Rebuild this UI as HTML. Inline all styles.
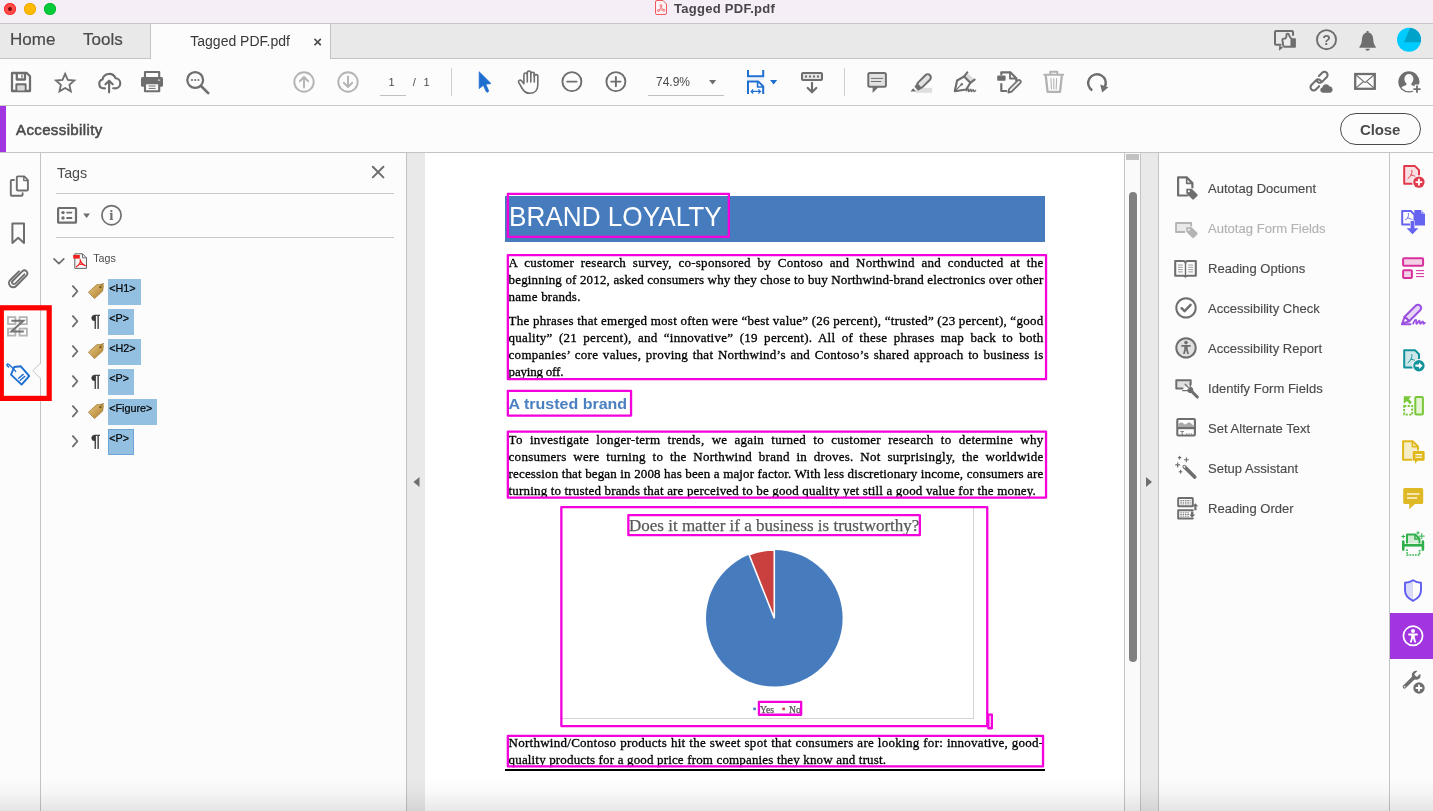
<!DOCTYPE html>
<html lang="en">
<head>
<meta charset="utf-8">
<title>Tagged PDF.pdf</title>
<style>
*{box-sizing:border-box;margin:0;padding:0}
html,body{width:1433px;height:811px;overflow:hidden;background:#fcfcfc}
body{position:relative;font-family:"Liberation Sans",Arial,sans-serif;color:#4b4b4b}
.a{position:absolute}
.t{position:absolute;white-space:pre;line-height:1}
svg{position:absolute;left:0;top:0;overflow:visible}
.s{fill:none;stroke:#6e6e6e;stroke-width:2;stroke-linecap:round;stroke-linejoin:round}
.f{fill:#6e6e6e;stroke:none}
.ls{fill:none;stroke:#b4b4b4;stroke-width:2;stroke-linecap:round;stroke-linejoin:round}
.bs{fill:none;stroke:#1f6fd0;stroke-width:2;stroke-linecap:round;stroke-linejoin:round}
.m{position:absolute;border:2px solid #f200d8}
.doc{position:absolute;white-space:pre;font-family:"Liberation Serif","Times New Roman",serif;font-size:13px;line-height:17px;color:#000;letter-spacing:.26px;-webkit-text-stroke:.3px #000}
.hl{position:absolute;background:#93c0e0;height:26px}
.tag{position:absolute;white-space:pre;font-size:10.800px;line-height:12px;color:#000;-webkit-text-stroke:.2px #000}
.ri{position:absolute;left:1208px;letter-spacing:.03px;font-size:13px;line-height:16px;white-space:pre;color:#4b4b4b;-webkit-text-stroke:.15px currentColor}
</style>
</head>
<body>
<div id="app" style="position:absolute;left:0;top:0;width:1433px;height:811px;overflow:hidden;will-change:transform">
<!-- window title bar -->
<div class="a" style="left:0;top:0;width:1433px;height:23px;background:#f6eef7"></div>
<div class="a" style="left:0;top:23px;width:1433px;height:1px;background:#c9c6c9"></div>
<div class="a" style="left:4px;top:3px;width:12px;height:12px;border-radius:50%;background:#ff4a4a;box-shadow:inset 0 0 0 .8px #ff2626"></div>
<div class="a" style="left:8px;top:7px;width:4px;height:4px;border-radius:50%;background:#7a0a0a"></div>
<div class="a" style="left:24px;top:3px;width:12px;height:12px;border-radius:50%;background:#feba00;box-shadow:inset 0 0 0 .8px #eaa200"></div>
<div class="a" style="left:44px;top:3px;width:12px;height:12px;border-radius:50%;background:#05cb3a;box-shadow:inset 0 0 0 .8px #00b62c"></div>
<div class="t" style="left:674px;top:1px;font-size:13px;font-weight:bold;letter-spacing:.28px;line-height:15px;color:#48444a">Tagged PDF.pdf</div>
<!-- tab bar -->
<div class="a" style="left:0;top:24px;width:1433px;height:34px;background:#e9e9e9"></div>
<div class="a" style="left:0;top:58px;width:1433px;height:1px;background:#c4c4c4"></div>
<div class="a" style="left:150px;top:24px;width:181px;height:35px;background:#fcfcfc;border-left:1px solid #c4c4c4;border-right:1px solid #c4c4c4"></div>
<div class="t" style="left:10px;top:30px;font-size:17px;line-height:20px;color:#4b4b4b;-webkit-text-stroke:.2px #4b4b4b">Home</div>
<div class="t" style="left:83px;top:30px;font-size:17px;line-height:20px;color:#4b4b4b;-webkit-text-stroke:.2px #4b4b4b">Tools</div>
<div class="t" style="left:190.300px;top:33.400px;font-size:14px;line-height:17px;color:#383838">Tagged PDF.pdf</div>
<div class="t" style="left:313.200px;top:32.600px;font-size:15px;line-height:18px;color:#4b4b4b;font-weight:bold">×</div>
<!-- toolbar -->
<div class="a" style="left:0;top:105px;width:1433px;height:1px;background:#c8c8c8"></div>
<div class="t" style="left:388.600px;top:74.800px;font-size:11px;line-height:14px;color:#4b4b4b">1</div>
<div class="a" style="left:380px;top:95px;width:26px;height:1px;background:#c0c0c0"></div>
<div class="t" style="left:412.700px;top:74.800px;font-size:11px;line-height:14px;color:#4b4b4b">/</div>
<div class="t" style="left:423.600px;top:74.800px;font-size:11px;line-height:14px;color:#4b4b4b">1</div>
<div class="a" style="left:451px;top:68px;width:1px;height:28px;background:#cfcfcf"></div>
<div class="t" style="left:656px;top:75px;font-size:12px;line-height:14px;color:#4b4b4b">74.9%</div>
<div class="a" style="left:648px;top:95px;width:76px;height:1px;background:#c0c0c0"></div>
<div class="a" style="left:844px;top:68px;width:1px;height:28px;background:#cfcfcf"></div>
<!-- accessibility bar -->
<div class="a" style="left:0;top:106px;width:6px;height:46px;background:#a135e0"></div>
<div class="a" style="left:0;top:152px;width:1433px;height:1px;background:#c4c4c4"></div>
<div class="t" style="left:16px;top:121px;font-size:15px;letter-spacing:.38px;-webkit-text-stroke:.55px #4b4b4b;line-height:18px;color:#4b4b4b">Accessibility</div>
<div class="a" style="left:1340px;top:113px;width:81px;height:32px;border:1px solid #4b4b4b;border-radius:16px;background:#fcfcfc"></div>
<div class="t" style="left:1360px;top:121px;font-size:15px;font-weight:bold;line-height:18px;color:#4b4b4b;letter-spacing:-.15px">Close</div>
<!-- toolbar icons -->
<svg width="1433" height="811" viewBox="0 0 1433 811">
 <!-- title doc icon -->
 <path d="M657 .5h6l3.5 3.5v9a1.5 1.5 0 0 1-1.5 1.5h-8a1.5 1.5 0 0 1-1.5-1.5v-11a1.5 1.5 0 0 1 1.5-1.5z" fill="#fdf3f5" stroke="#f05a5f" stroke-width="1"/>
 <g fill="none" stroke="#f05a5f" stroke-width=".8"><circle cx="661" cy="5.6" r="1"/><circle cx="658.3" cy="10.6" r="1"/><circle cx="663.8" cy="10.2" r="1"/><path d="M661 6.6c0 2-1.4 3-2.2 3.4M661 6.6c.4 1.6 1.3 2.6 2.3 3M659.3 10.4c1.4-.6 2.6-.6 3.6-.3"/></g>
 <!-- tab bar right -->
 <g class="s" style="stroke-width:2">
  <path d="M1280.600 44.800h-4.600a1 1 0 0 1-1-1v-11.800a1 1 0 0 1 1-1h16a1 1 0 0 1 1 1v3"/>
  <path d="M1282.400 39.800c0-.8.500-1.200 1.300-1.200h1.700c1-1.200 1.300-2.400 1.100-3.700c-.2-1.500 2.200-1.900 2.600.3c.2 1.200 1 2.500 2.300 3.600v7.900h-6.600c-.9 0-1.400-.4-1.600-1.200z" style="fill:#ededed;stroke-width:1.900"/>
 </g>
 <path d="M1279.200 45.400l-.2 5.400l4.200-3.400z" class="f"/>
 <rect x="1291.600" y="38.300" width="4.300" height="9.400" rx=".8" class="f"/>
 <circle cx="1326.500" cy="39.700" r="9.550" class="s" style="stroke-width:1.900"/>
 <path class="f" d="M1366.6 31h2v1.4c3 .7 4.5 3.2 4.6 6.4.1 3.600 1 6 2.600 8.200v.8h-16.400v-.8c1.600-2.200 2.500-4.600 2.600-8.200.1-3.200 1.600-5.700 4.600-6.400z"/>
 <path class="f" d="M1365.300 48.700h4.600c-.3 1.300-1.200 2-2.300 2s-2-.7-2.300-2z"/>
 <circle cx="1409" cy="39.800" r="12" fill="#00cbff"/>
 <clipPath id="av"><circle cx="1409" cy="39.800" r="12"/></clipPath>
 <path d="M1410.400 27l-6.400 15.200h18v-15.200z" fill="#00a2c9" clip-path="url(#av)"/>
 <!-- main toolbar -->
 <g class="s" stroke-width="2" style="stroke-width:2.26">
  <path d="M12 73h14.800l3.200 3.200v14.800h-18z" style="stroke-linejoin:round"/>
  <path d="M16.800 73.500v6h8.200v-6"/>
  <path d="M16.500 90.500v-6h9v6"/>
 </g>
 <rect x="17.500" y="85.500" width="7" height="5" fill="#d9d9d9"/>
 <rect x="21.300" y="74.600" width="1.300" height="3.200" fill="#6e6e6e"/>
 <polygon class="s" style="stroke-width:1.8;stroke-linejoin:miter" points="65.15,73.80 67.80,79.86 74.38,80.50 69.43,84.89 70.85,91.35 65.15,88.00 59.45,91.35 60.87,84.89 55.92,80.50 62.50,79.86"/>
 <g class="s" style="stroke-width:2.15">
  <path d="M105 88.300h-1.600a4.500 4.500 0 0 1-.9-8.800a6.800 6.800 0 0 1 13-1.300a5 5 0 0 1-.5 10.100h-1.800"/>
  <path d="M109.100 92.300v-11.200M105.500 84.300l3.600-3.600l3.600 3.600"/>
 </g>
 <!-- printer -->
 <rect x="141" y="77" width="22" height="9.800" rx="1.600" class="f"/>
 <rect x="145" y="72" width="14.200" height="6" class="s" style="stroke-width:2.15;fill:#fcfcfc"/>
 <rect x="145" y="83.200" width="14.200" height="8" class="s" style="stroke-width:2.15;fill:#fcfcfc"/>
 <path d="M149 86h6.200M149 88.400h6.200" class="s" style="stroke-width:1"/>
 <rect x="158" y="79.600" width="2.200" height="1" fill="#f0f0f0"/>
 <!-- search -->
 <circle cx="195.200" cy="80" r="7.900" class="s" style="stroke-width:2.26"/>
 <path d="M201 86l7.200 7.200" class="s" style="stroke-width:2.6"/>
 <circle cx="192" cy="80" r="1.05" class="f"/><circle cx="195.200" cy="80" r="1.05" class="f"/><circle cx="198.400" cy="80" r="1.05" class="f"/>
 <!-- page up/down -->
 <g class="ls" style="stroke-width:1.92">
  <circle cx="304" cy="82" r="9.700"/>
  <path d="M304 87.500v-10.500M299.800 81.200l4.200-4.200l4.200 4.200"/>
  <circle cx="348" cy="82" r="9.700"/>
  <path d="M348 76.500v10.500M343.800 82.800l4.200 4.200l4.200-4.200"/>
 </g>
 <!-- select arrow -->
 <path d="M479.200 71.800v16.800l4.100-3.400l2.900 6.200a1 1 0 0 0 2.300-1l-2.800-6.200l5.300-.6z" fill="#1f6fd0" stroke="#1f6fd0" stroke-width=".8" stroke-linejoin="round"/>
 <!-- hand -->
 <g class="s" style="stroke-width:1.6">
  <path d="M523.9 83V74.600c0-2.200 3.400-2.200 3.400 0V72.700c0-2.200 3.500-2.200 3.500 0V73.900c0-2.200 3.500-2.200 3.500 0V76.300c0-2.200 3.500-2.200 3.500 0V85c0 5.200-3.400 8.300-8 8.300c-3.600 0-5.800-1.600-7.600-4.800l-3.500-6.100c-1-1.800 1.400-3.200 2.800-1.600l2.400 2.900"/>
  <path d="M527.3 74.600V82M530.800 72.700V82M534.300 73.900V82"/>
 </g>
 <!-- zoom out/in -->
 <g class="s" style="stroke-width:1.92">
  <circle cx="571.900" cy="81.600" r="9.500"/><path d="M567.200 81.600h9.400"/>
  <circle cx="615.900" cy="81.600" r="9.500"/><path d="M611.200 81.600h9.400M615.900 76.900v9.400"/>
 </g>
 <path d="M709 80h7.200l-3.600 4.400z" class="f"/>
 <!-- fit width -->
 <g class="bs" style="stroke-width:2;stroke-linecap:butt;stroke-linejoin:miter">
  <path d="M748 70v6.300h15.200v-6.300"/>
  <path d="M748 94v-12.600h10.200l5 5v7.600"/>
  <path d="M757.600 81.600v5.400h5.400" style="stroke-width:1.6"/>
  <path d="M751.300 91.400h9M753.200 89.300l-2.100 2.100l2.100 2.100M758.400 89.300l2.100 2.100l-2.100 2.100" style="stroke-width:1.2"/>
 </g>
 <rect x="747" y="78.600" width="17.200" height="1" fill="#dde8f5"/>
 <path d="M770 80h7.200l-3.600 4.400z" fill="#1f6fd0"/>
 <!-- scrolling -->
 <rect x="802" y="73" width="20" height="7" rx="1" class="s" style="stroke-width:2.050;fill:#e4e4e4"/>
 <g class="f"><rect x="805" y="75.500" width="2" height="2"/><rect x="809" y="75.500" width="2" height="2"/><rect x="813" y="75.500" width="2" height="2"/><rect x="817" y="75.500" width="2" height="2"/></g>
 <path d="M812 82.800v9M807.700 88l4.300 4.300l4.300-4.300" class="s" style="stroke-width:2.15"/>
 <!-- comment -->
 <rect x="868.300" y="73" width="17.600" height="13.700" rx="1.500" class="s" style="stroke-width:2;fill:#e2e2e2"/>
 <path d="M872.600 87v6l6-6z" class="f"/>
 <path d="M871.300 78.400h11.500M871.300 81.500h9.600" class="s" style="stroke-width:1"/>
 <!-- highlighter -->
 <rect x="916" y="87.800" width="16.200" height="5" fill="#dedede"/>
 <rect x="-3.200" y="-15.600" width="6.400" height="16.600" rx="3.200" class="s" style="stroke-width:2;fill:#e2e2e2" transform="translate(918.9 86.200) rotate(45)"/>
 <path d="M-3.400 -1h6.800l-.6 4.600h-5.600z" class="f" stroke="#6e6e6e" stroke-width="1.600" stroke-linejoin="round" transform="translate(918.9 86.200) rotate(45)"/>
 <path d="M913.200 88.200l3 3.400h-5.800z" class="f" stroke="#6e6e6e" stroke-width=".8" stroke-linejoin="round"/>
 <!-- sign pen -->
 <path d="M968 73.500l6 5.600l-3.400 3.600l-5.800-5.600z" fill="#dcdcdc"/>
 <g class="s" style="stroke-width:2.150">
  <path d="M954.800 91.200l2.300-10.700l7-4l6.300 6.200l-4.200 6.800z"/>
  <path d="M954.800 91.200l6.500-6.600" style="stroke-width:1.2"/>
  <path d="M964 76.600l3.300-4.200M970.300 82.800l4.300-3.200"/>
  <path d="M966.500 91c.8-1.800 1.600-2.600 2-2c.4.700-.4 2.600.3 2.700c.7 0 1.200-2.600 2-2.500c.6.100-.2 2.400.5 2.500c.7 0 1.300-2 2-2c.6 0 0 1.900.7 2c.5 0 1-.6 1.600-1.200" style="stroke-width:1.350"/>
 </g>
 <circle cx="961.800" cy="84.200" r="1.200" class="f"/>
 <!-- edit pdf -->
 <g class="s" style="stroke-width:2.15">
  <path d="M1001.300 74.500v-2.200h9l6 6v2.400"/>
  <path d="M1010 72.500v6h6" style="stroke-width:1.81"/>
  <path d="M1001.300 84v7h5"/>
  <path d="M1008.300 92.600l.8-3.600l8.700-8.700c1.500-1.500 4 1 2.600 2.500l-8.700 8.800z" style="stroke-width:1.69;fill:#e8e8e8"/>
 </g>
 <rect x="997.200" y="75.400" width="8.400" height="5.400" rx="1" class="f"/>
 <!-- trash -->
 <g class="ls" style="stroke:#b2b2b2;stroke-width:2.03">
  <path d="M1044.200 74.800h19"/>
  <path d="M1050.300 74.600v-2.800h7v2.800"/>
  <path d="M1045.800 76l1.800 15.800h12.400l1.800-15.800" style="stroke-width:2.26"/>
  <path d="M1051 78.500l.4 10.500M1053.800 78.500v10.500M1056.600 78.500l-.4 10.500" style="stroke-width:1.1"/>
 </g>
 <!-- rotate -->
 <path d="M1092.200 90.400a8.800 8.800 0 1 1 12.700-3.600" class="s" style="stroke-width:2.400;stroke-linecap:butt"/>
 <path d="M1100.200 84.600l8.200 2.700l-6.200 5.300z" class="f" stroke="#6e6e6e" stroke-width=".6" stroke-linejoin="round"/>
 <!-- share link -->
 <g class="s" style="stroke-width:2.050">
  <path d="M-1.300 -3.150H3.300A3.150 3.150 0 0 1 3.300 3.150H-3.300A3.150 3.150 0 0 1 -6.155 -1.331" transform="translate(1322.100 77.300) rotate(-45)"/>
  <path d="M-1.300 -3.150H3.300A3.150 3.150 0 0 1 3.300 3.150H-3.300A3.150 3.150 0 0 1 -6.155 -1.331" transform="translate(1316 84.900) rotate(135)"/>
 </g>
 <path d="M1322.800 92.700a2.700 2.700 0 0 1-.6-5.300a3.900 3.900 0 0 1 7.200-1.100a3.300 3.300 0 0 1 1 6.400z" class="f" stroke="#fcfcfc" stroke-width="1.400" paint-order="stroke"/>
 <!-- mail -->
 <rect x="1355.200" y="74" width="19.600" height="14.800" class="s" style="stroke-width:2.26;stroke-linejoin:miter"/>
 <path d="M1355.500 74.500l9.500 8.200l9.500-8.200M1355.500 88.300l8-6.800M1374.500 88.300l-8-6.800" class="s" style="stroke-width:1.1"/>
 <!-- add user -->
 <circle cx="1408.900" cy="81.900" r="10.600" class="f"/>
 <clipPath id="uc"><circle cx="1408.900" cy="81.900" r="9.300"/></clipPath>
 <path d="M1408.900 74c2.700 0 4.500 2.100 4.500 4.800c0 2-.8 3.700-2 4.800v1.400c2.600.8 5 2 6.600 4v6h-18.200v-6c1.600-2 4-3.200 6.600-4v-1.400c-1.200-1.100-2-2.800-2-4.800c0-2.700 1.800-4.800 4.500-4.800z" fill="#fcfcfc" clip-path="url(#uc)"/>
 <path d="M1417 84.600v9M1412.500 89.100h9" stroke="#fcfcfc" stroke-width="4.600" fill="none"/>
 <path d="M1417 85.500v7.200M1413.400 89.100h7.200" class="s" style="stroke-width:1.800;stroke-linecap:butt"/>
</svg>
<div class="t" style="left:1322.300px;top:32.300px;font-size:14px;font-weight:bold;line-height:16px;color:#6e6e6e">?</div>
<!-- left rail + tags panel -->
<div class="a" style="left:40px;top:153px;width:1px;height:658px;background:#c4c4c4"></div>
<div class="t" style="left:57px;top:165px;font-size:14.3px;line-height:17px;color:#4b4b4b">Tags</div>
<div class="a" style="left:56px;top:193px;width:338px;height:1px;background:#c8c8c8"></div>
<div class="a" style="left:56px;top:237px;width:338px;height:1px;background:#c8c8c8"></div>
<div class="t" style="left:93.200px;top:252px;font-size:10.700px;line-height:12px;color:#4b4b4b">Tags</div>
<div class="hl" style="left:108px;top:279px;width:33px"></div>
<div class="hl" style="left:108px;top:309px;width:26px"></div>
<div class="hl" style="left:108px;top:339px;width:33px"></div>
<div class="hl" style="left:108px;top:369px;width:26px"></div>
<div class="hl" style="left:108px;top:399px;width:49px"></div>
<div class="hl" style="left:108px;top:429px;width:26px;border:1px solid #6ea6dc"></div>
<div class="tag" style="left:109.200px;top:281.5px">&lt;H1&gt;</div>
<div class="tag" style="left:109.200px;top:311.5px">&lt;P&gt;</div>
<div class="tag" style="left:109.200px;top:341.5px">&lt;H2&gt;</div>
<div class="tag" style="left:109.200px;top:371.5px">&lt;P&gt;</div>
<div class="tag" style="left:109.200px;top:401.5px">&lt;Figure&gt;</div>
<div class="tag" style="left:109.200px;top:431.5px">&lt;P&gt;</div>
<!-- splitters -->
<div class="a" style="left:406px;top:153px;width:1px;height:658px;background:#c0c0c0"></div>
<div class="a" style="left:407px;top:153px;width:18px;height:658px;background:#e9e9e9"></div>
<!-- left rail & tags tree icons -->
<svg width="1433" height="811" viewBox="0 0 1433 811">
 <defs>
  <linearGradient id="tg" x1="0" y1="0" x2="1" y2="1"><stop offset="0" stop-color="#e3c684"/><stop offset=".55" stop-color="#c99f52"/><stop offset="1" stop-color="#a97a2c"/></linearGradient>
  <linearGradient id="pg" x1="0" y1="0" x2="1" y2="0"><stop offset="0" stop-color="#8a8a8a"/><stop offset="1" stop-color="#1e1e1e"/></linearGradient>
 </defs>
 <!-- pages -->
 <g class="s" style="stroke-width:1.900">
  <path d="M14 180h-2.200a1 1 0 0 0-1 1v13.800a1 1 0 0 0 1 1h9.800a1 1 0 0 0 1-1v-1.600"/>
  <path d="M17.800 176.400h6.400l3.700 3.700v9.400a1 1 0 0 1-1 1h-9.100a1 1 0 0 1-1-1v-12.100a1 1 0 0 1 1-1z" style="fill:#fcfcfc"/>
  <path d="M23.800 176.800v3.800h3.800" style="stroke-width:1.400"/>
 </g>
 <!-- bookmark -->
 <path d="M12.400 223.500h11.600v19.400l-5.800-5.200l-5.800 5.200z" class="s" style="stroke-width:2"/>
 <!-- attachment -->
 <path d="M24.500 274.600l-9.300 9.300c-1.700 1.700-4.300-.9-2.600-2.600l9.600-9.600c2.900-2.900 7.200 1.400 4.300 4.300l-10.300 10.300c-4 4-9.900-2-5.900-6l8.700-8.700" class="s" style="stroke-width:1.900" transform="translate(0 -.3)"/>
 <!-- content order -->
 <g fill="none" stroke="#b4b4b4" stroke-width="1.800">
  <rect x="8" y="317.100" width="7.400" height="7"/><rect x="19.500" y="317.100" width="7.400" height="7"/>
  <rect x="8" y="328.600" width="7.400" height="7"/><rect x="19.500" y="328.600" width="7.400" height="7"/>
 </g>
 <path d="M11.400 320.700h12l-12 10.900h12.400" fill="none" stroke="#747474" stroke-width="2" stroke-linejoin="miter"/>
 <!-- tags (active) -->
 <g fill="none" stroke="#1f6fd0" stroke-width="1.900" stroke-linejoin="round" stroke-linecap="round">
  <path d="M11 374.600l3.200-7.600l6.400-.8l8.600 9.800l-7.600 8.600z"/>
  <path d="M15.600 371.400c-1.600-2-3.800-4.400-5.800-6.200c-1-1-2.400-1.600-2.800-.8c-.4.800.6 2 1.800 2.600" stroke-width="1.400"/>
  <path d="M18.600 378.200l4.600-3.800M20.200 380.200l4.600-3.800" stroke-width="1.400"/>
 </g>
 <!-- rail notch -->
 <path d="M40.500 363l-7.600 7.700l7.600 7.700" fill="#fcfcfc" stroke="#c4c4c4" stroke-width="1"/>
 <rect x="40" y="364" width="1" height="13.400" fill="#fcfcfc"/>
 <!-- panel close -->
 <path d="M372.800 166.800l10.600 10.600M383.400 166.800l-10.600 10.600" class="s" style="stroke-width:2;stroke-linecap:round"/>
 <!-- options -->
 <rect x="58.100" y="208" width="17.900" height="14.700" rx=".8" class="s" style="stroke-width:2.200"/>
 <circle cx="63" cy="212.600" r="1.700" class="f"/><circle cx="63" cy="218" r="1.700" class="f"/>
 <path d="M66.400 212.600h5.800M66.400 218h5.800" class="s" style="stroke-width:1.800;stroke-linecap:butt"/>
 <path d="M83.200 213.600h6.800l-3.400 4.300z" class="f"/>
 <circle cx="111.500" cy="215.200" r="9.600" class="s" style="stroke-width:1.700"/>
 <!-- tree root -->
 <path d="M54 258.900l4.900 4.700l4.900-4.700" class="s" style="stroke-width:1.700"/>
 <path d="M74.800 253.800h7.700l4 4v10.600h-11.700z" fill="#f4f4f4" stroke="#555" stroke-width=".9"/>
 <path d="M82.500 253.800v4h4" fill="none" stroke="#555" stroke-width=".8"/>
 <rect x="73.200" y="255" width="6.600" height="3.600" fill="#f21d1d"/>
 <path d="M80.200 259.600c.6 2.600-.8 5.200-3.800 7.200M78.800 264.200c2.200-.2 4.400.3 6.600 1.500M80.200 259.600c.5 2.300 2.200 4.600 5 6" fill="none" stroke="#f21d1d" stroke-width="1.150" stroke-linecap="round"/>
 <path d="M72.900 286.10l4.500 5.150l-4.500 5.150" class="s" style="stroke-width:1.850"/>
 <g transform="translate(0 0)">
  <path d="M88.400 292.200l8.200-7.400l5.600-.6c.8 0 1.300.5 1.200 1.200l-.7 5.600l-8.200 7.600z" fill="url(#tg)" stroke="#9a7228" stroke-width=".7" stroke-linejoin="round"/>
  <circle cx="100.400" cy="287.200" r="1.100" fill="#6b4d16"/>
  <path d="M100.400 287.200c.6-2.200 2-3.600 3.400-3.800" fill="none" stroke="#8c6a2a" stroke-width=".9"/>
 </g>
 <path d="M72.900 316.10l4.500 5.150l-4.500 5.150" class="s" style="stroke-width:1.850"/>
 <path d="M72.900 346.10l4.500 5.150l-4.500 5.150" class="s" style="stroke-width:1.850"/>
 <g transform="translate(0 60)">
  <path d="M88.400 292.200l8.200-7.400l5.600-.6c.8 0 1.300.5 1.200 1.200l-.7 5.600l-8.200 7.600z" fill="url(#tg)" stroke="#9a7228" stroke-width=".7" stroke-linejoin="round"/>
  <circle cx="100.400" cy="287.200" r="1.100" fill="#6b4d16"/>
  <path d="M100.400 287.200c.6-2.200 2-3.600 3.400-3.800" fill="none" stroke="#8c6a2a" stroke-width=".9"/>
 </g>
 <path d="M72.900 376.10l4.500 5.150l-4.500 5.150" class="s" style="stroke-width:1.850"/>
 <path d="M72.900 406.10l4.500 5.150l-4.500 5.150" class="s" style="stroke-width:1.850"/>
 <g transform="translate(0 120)">
  <path d="M88.400 292.200l8.200-7.400l5.600-.6c.8 0 1.300.5 1.200 1.200l-.7 5.600l-8.200 7.600z" fill="url(#tg)" stroke="#9a7228" stroke-width=".7" stroke-linejoin="round"/>
  <circle cx="100.400" cy="287.200" r="1.100" fill="#6b4d16"/>
  <path d="M100.400 287.200c.6-2.200 2-3.600 3.400-3.800" fill="none" stroke="#8c6a2a" stroke-width=".9"/>
 </g>
 <path d="M72.900 436.10l4.500 5.150l-4.500 5.150" class="s" style="stroke-width:1.850"/>
</svg>
<div class="t" style="left:109.300px;top:206.500px;font-family:'Liberation Serif',serif;font-weight:bold;font-size:15px;line-height:17px;color:#6e6e6e">i</div>
<div class="t" style="left:90.500px;top:311.7px;font-size:16.300px;line-height:18px;color:#3a3a3a;-webkit-text-stroke:.35px #3a3a3a;transform:scaleX(1.1);transform-origin:0 0">¶</div>
<div class="t" style="left:90.500px;top:371.7px;font-size:16.300px;line-height:18px;color:#3a3a3a;-webkit-text-stroke:.35px #3a3a3a;transform:scaleX(1.1);transform-origin:0 0">¶</div>
<div class="t" style="left:90.500px;top:431.7px;font-size:16.300px;line-height:18px;color:#3a3a3a;-webkit-text-stroke:.35px #3a3a3a;transform:scaleX(1.1);transform-origin:0 0">¶</div>
<!-- callout box -->
<svg width="1433" height="811" viewBox="0 0 1433 811"><rect x="1.3" y="307.8" width="47.9" height="90.6" fill="none" stroke="#ff0000" stroke-width="5.2"/></svg>
<!-- document page -->
<div class="a" style="left:425px;top:153px;width:699px;height:658px;background:#fff"></div>
<div class="a" style="left:505px;top:196px;width:540px;height:46px;background:#467bbd"></div>
<div class="t" style="left:509.4px;top:198.600px;font-size:28px;line-height:36px;color:#fff;transform:scaleX(.934);transform-origin:0 0">BRAND LOYALTY</div>
<div class="t" style="left:508.600px;top:395.400px;font-size:16px;font-weight:bold;line-height:20px;color:#4a7fc0;transform:scaleY(.935);transform-origin:0 0">A trusted brand</div>
<div class="doc" style="left:508.6px;top:253.65px;letter-spacing:0.260px;word-spacing:3.216px">A customer research survey, co-sponsored by Contoso and Northwind and conducted at the</div>
<div class="doc" style="left:508.6px;top:270.65px;letter-spacing:0.157px;word-spacing:0.000px">beginning of 2012, asked consumers why they chose to buy Northwind-brand electronics over other</div>
<div class="doc" style="left:508.6px;top:287.65px;letter-spacing:0.226px;word-spacing:0.000px">name brands.</div>
<div class="doc" style="left:508.6px;top:311.65px;letter-spacing:0.260px;word-spacing:-0.141px">The phrases that emerged most often were “best value” (26 percent), “trusted” (23 percent), “good</div>
<div class="doc" style="left:508.6px;top:328.65px;letter-spacing:0.260px;word-spacing:2.839px">quality” (21 percent), and “innovative” (19 percent). All of these phrases map back to both</div>
<div class="doc" style="left:508.6px;top:345.65px;letter-spacing:0.260px;word-spacing:1.147px">companies’ core values, proving that Northwind’s and Contoso’s shared approach to business is</div>
<div class="doc" style="left:508.6px;top:362.65px;letter-spacing:-0.201px;word-spacing:0.000px">paying off.</div>
<div class="doc" style="left:508.6px;top:430.65px;letter-spacing:0.260px;word-spacing:3.745px">To investigate longer-term trends, we again turned to customer research to determine why</div>
<div class="doc" style="left:508.6px;top:447.65px;letter-spacing:0.260px;word-spacing:3.260px">consumers were turning to the Northwind brand in droves. Not surprisingly, the worldwide</div>
<div class="doc" style="left:508.6px;top:464.65px;letter-spacing:0.147px;word-spacing:0.000px">recession that began in 2008 has been a major factor. With less discretionary income, consumers are</div>
<div class="doc" style="left:508.6px;top:481.65px;letter-spacing:0.165px;word-spacing:0.000px">turning to trusted brands that are perceived to be good quality yet still a good value for the money.</div>
<div class="doc" style="left:508.6px;top:733.95px;letter-spacing:0.260px;word-spacing:0.359px">Northwind/Contoso products hit the sweet spot that consumers are looking for: innovative, good-</div>
<div class="doc" style="left:508.6px;top:751.05px;letter-spacing:0.156px;word-spacing:0.000px">quality products for a good price from companies they know and trust.</div>
<div class="t" style="left:629px;top:515px;font-family:'Liberation Serif','Times New Roman',serif;font-size:17px;line-height:22px;color:#595959;-webkit-text-stroke:.25px #595959">Does it matter if a business is trustworthy?</div>
<div class="a" style="left:561px;top:507px;width:413px;height:212px;border:1px solid #d4d4d4"></div>
<svg width="1433" height="811" viewBox="0 0 1433 811">
  <circle cx="774.3" cy="618.2" r="68.3" fill="#467bbd"/>
  <path d="M774.3 618.2 L774.3 549.9 A68.3 68.3 0 0 0 749.1 554.7 Z" fill="#c9403f" stroke="#fff" stroke-width="1.6" stroke-linejoin="miter"/>
  <rect x="753.3" y="707.6" width="2.6" height="2.6" fill="#467bbd"/>
  <rect x="782.3" y="707.6" width="2.6" height="2.6" fill="#c9403f"/>
</svg>
<div class="t" style="left:760px;top:704px;font-family:'Liberation Serif','Times New Roman',serif;font-size:9.700px;line-height:11px;color:#595959;-webkit-text-stroke:.25px #595959">Yes</div>
<div class="t" style="left:789px;top:704px;font-family:'Liberation Serif','Times New Roman',serif;font-size:9.700px;line-height:11px;color:#595959;-webkit-text-stroke:.25px #595959">No</div>
<div class="a" style="left:505px;top:769.400px;width:540px;height:2.100px;background:#000"></div>
<!-- tag highlight outlines -->
<svg width="1433" height="811" viewBox="0 0 1433 811"><g fill="none" stroke="#f400dc" stroke-width="2.3" stroke-linejoin="round">
 <rect x="507.85" y="193.85" width="221.00" height="43.00"/>
 <rect x="507.85" y="255.15" width="538.20" height="124.00"/>
 <rect x="507.85" y="390.95" width="123.20" height="24.60"/>
 <rect x="507.85" y="431.55" width="538.20" height="66.10"/>
 <rect x="561.35" y="507.05" width="425.90" height="219.00"/>
 <rect x="628.35" y="515.15" width="291.50" height="20.00"/>
 <rect x="758.95" y="701.95" width="42.20" height="12.80"/>
 <rect x="988.35" y="714.55" width="3.50" height="13.70"/>
 <rect x="507.85" y="735.85" width="535.20" height="30.60"/>
</g></svg>
<!-- scrollbar + right splitter -->
<div class="a" style="left:1124px;top:153px;width:17px;height:658px;background:#fafafa;border-left:1px solid #c4c4c4;border-right:1px solid #c4c4c4"></div>
<div class="a" style="left:1126px;top:154px;width:13px;height:6px;background:#c2c2c2"></div>
<div class="a" style="left:1129px;top:192px;width:8px;height:470px;background:#808080;border-radius:4px"></div>
<div class="a" style="left:1141px;top:153px;width:17px;height:658px;background:#e9e9e9"></div>
<div class="a" style="left:1158px;top:153px;width:1px;height:658px;background:#c4c4c4"></div>
<svg width="1433" height="811" viewBox="0 0 1433 811">
  <path d="M419.5 477 L419.5 487 L413.5 482 Z" fill="#6e6e6e"/>
  <path d="M1146 477 L1146 487 L1152 482 Z" fill="#6e6e6e"/>
</svg>
<!-- accessibility tool list -->
<div class="ri" style="top:181px">Autotag Document</div>
<div class="ri" style="top:221px;color:#b3b3b3">Autotag Form Fields</div>
<div class="ri" style="top:261px">Reading Options</div>
<div class="ri" style="top:301px">Accessibility Check</div>
<div class="ri" style="top:341px">Accessibility Report</div>
<div class="ri" style="top:381px">Identify Form Fields</div>
<div class="ri" style="top:421px">Set Alternate Text</div>
<div class="ri" style="top:461px">Setup Assistant</div>
<div class="ri" style="top:501px">Reading Order</div>
<!-- right rail -->
<div class="a" style="left:1389px;top:153px;width:1px;height:658px;background:#c4c4c4"></div>
<div class="a" style="left:1390px;top:613px;width:43px;height:46px;background:#a135e0"></div>
<!-- accessibility tool icons + right rail icons -->
<svg width="1433" height="811" viewBox="0 0 1433 811">
 <!-- autotag document -->
 <path d="M1187.500 195.500h-9.400v-18.100h8.600l5.700 5.700v4.400" class="s" style="stroke-width:2.2"/>
 <path d="M1186.700 177.600v5.700h5.600" class="s" style="stroke-width:1.65"/>
 <path d="M1186.300 188.700h5.400l5.600 5.600c.5.500.5 1.100 0 1.600l-3.400 3.400c-.5.500-1.100.5-1.600 0l-5.600-5.600c-.3-.3-.4-.6-.4-1z" class="f"/>
 <circle cx="1188.900" cy="191.300" r="1" fill="#fcfcfc"/>
 <!-- autotag form fields (disabled) -->
 <path d="M1185 232h-9v-9h15.200v3.600" fill="#e9e9e9" stroke="#b4b4b4" stroke-width="1.800" stroke-linejoin="round"/>
 <path d="M1186.300 227.200h5.400l5.600 5.600c.5.500.5 1.100 0 1.600l-3.400 3.400c-.5.500-1.100.5-1.600 0l-5.600-5.600c-.3-.3-.4-.6-.4-1z" fill="#b4b4b4"/>
 <circle cx="1188.900" cy="229.800" r="1" fill="#fcfcfc"/>
 <!-- reading options -->
 <g class="s" style="stroke-width:2.09;stroke-linejoin:round">
  <path d="M1175.200 261h8c1.400 0 2.300.7 2.300 1.800c0-1.100.9-1.800 2.300-1.800h8v14.700h-8c-1.400 0-2.300.3-2.300 1c0-.7-.9-1-2.300-1h-8z"/>
  <path d="M1185.500 262.500v13.500" style="stroke-width:1.43"/>
  <path d="M1178 265h4.800M1178 267.300h4.800M1178 269.600h4.800M1178 271.900h4.800M1188.200 265h4.800M1188.200 267.300h4.800M1188.200 269.600h4.800M1188.200 271.900h4.800" style="stroke-width:.8;stroke:#858585;stroke-linecap:butt"/>
 </g>
 <!-- accessibility check -->
 <circle cx="1186" cy="307.900" r="9.700" class="s" style="stroke-width:1.98"/>
 <path d="M1181.600 308.200l3 3l6-6.400" class="s" style="stroke-width:2.42"/>
 <!-- accessibility report -->
 <circle cx="1186" cy="347.900" r="9.700" class="s" style="stroke-width:1.98;fill:#e0e0e0"/>
 <circle cx="1186" cy="342.600" r="1.800" class="f"/>
 <path d="M1181.300 345h9.400v1.700h-3v2.300l1.300 5h-1.800l-1.200-4.300l-1.200 4.300h-1.800l1.300-5v-2.300h-3z" class="f"/>
 <!-- identify form fields -->
 <path d="M1182.500 388.400h-6.200v-8.100h14.400v4.200" class="s" style="stroke-width:1.98;fill:#e0e0e0"/>
 <path d="M1182.800 390.700h3.600M1185.200 384.300l3.300 3.300M1190.200 383v3.400" class="s" style="stroke-width:1.32"/>
 <path d="M1186.500 390.500l4.200-4.200l2.500 2.500v2l5.200 5.200c.7.700.7 1.400 0 2.100c-.7.700-1.400.7-2.100 0l-5.200-5.200h-2z" class="f"/>
 <!-- set alternate text -->
 <rect x="1177.300" y="419" width="17.600" height="16.500" rx="1" class="s" style="stroke-width:2.09"/>
 <path d="M1178 428h16.500" class="s" style="stroke-width:2.42;stroke-linecap:butt"/>
 <path d="M1178.500 427v-3c1.500-1.900 3.600-2.200 5.300-.2c1 1 1.700 1 2.700 0c1.700-2 3.800-1.700 5.300.2l2 2v1z" fill="#a8a8a8"/>
 <text x="1180.200" y="434.700" font-family="Liberation Sans,sans-serif" font-weight="bold" font-size="6.200" fill="#6e6e6e">T</text>
 <path d="M1186.200 434h1.200M1188.600 434h1.200M1191 434h1.200" class="s" style="stroke-width:1;stroke-linecap:butt"/>
 <!-- setup assistant -->
 <path d="M1184.300 466.600l10.400 10.400" class="s" style="stroke-width:3.700"/>
 <path d="M1183.700 466l1.500 1.500" stroke="#fcfcfc" stroke-width="1.200" fill="none"/>
 <g class="s" style="stroke-width:1.15">
  <path d="M1186.400 457.700v4M1184.400 459.700h4"/>
  <path d="M1179.600 456.300v2.600M1178.300 457.600h2.600"/>
  <path d="M1177.700 462.900v4M1175.700 464.900h4"/>
  <path d="M1180.600 470.300v2.800M1179.200 471.700h2.800"/>
 </g>
 <!-- reading order -->
 <g class="s" style="stroke-width:1.98">
  <rect x="1178.200" y="497.900" width="14.600" height="8.400" rx=".6"/>
  <path d="M1192.800 510.200h-14.600v8.400h14.600"/>
  <path d="M1180.400 500.500h10.200M1180.400 502.200h10.200M1180.400 503.900h10.200M1180.400 512.800h9M1180.400 514.500h9M1180.400 516.200h9" style="stroke-width:0.9;stroke-dasharray:1.500 .8;stroke-linecap:butt"/>
 </g>
 <path d="M1195.400 503.200l2.800 3h-1.700v4h-2.200v-4h-1.700z" class="f" stroke="#6e6e6e" stroke-width=".5"/>
 <path d="M1192.200 517.800l-3-3.200h1.800v-3.200h2.400v3.200h1.800z" class="f" stroke="#6e6e6e" stroke-width=".5"/>

 <!-- right rail: create pdf -->
 <path d="M1404.200 166.100h10.800l4 4v13.600h-14.800z" fill="#f8dfe3" stroke="#e1394c" stroke-width="2" stroke-linejoin="round"/>
 <path d="M1411.8 170.4c.7 2.6-.9 5.800-3.800 8.200M1410.8 174.9c1.900 .2 3.500 .9 5 2" fill="none" stroke="#e1394c" stroke-width="1.0" stroke-linecap="round"/>
 <circle cx="1418.900" cy="182.100" r="6.800" fill="#fcfcfc"/>
 <circle cx="1418.900" cy="182.100" r="5.700" fill="#e1394c"/>
 <path d="M1418.900 178.800v6.600M1415.600 182.100h6.600" stroke="#fff" stroke-width="1.900" fill="none"/>
 <!-- combine -->
 <path d="M1414.400 210h7.200l3.400 3.400v12.100h-10.600z" fill="#6464f0"/>
 <path d="M1421.400 209.800v3.800h3.800z" fill="#fcfcfc"/>
 <path d="M1421.900 211.200v2h2z" fill="#6464f0"/>
 <path d="M1402.200 211h8.600l3.700 3.700v9.800h-12.300z" fill="#fcfcfc" stroke="#6464f0" stroke-width="2" stroke-linejoin="round"/>
 <path d="M1408.4 213.4c.7 2.6-.9 5.800-3 6.400M1407.4 217.9c1.900 .2 3.500 .9 5 2" fill="none" stroke="#6464f0" stroke-width="0.9" stroke-linecap="round"/>
 <path d="M1410.600 221h3.800v7.200h4l-5.900 6l-5.900-6h4z" fill="#6464f0" stroke="#fcfcfc" stroke-width="1" paint-order="stroke"/>
 <!-- organize -->
 <rect x="1403.100" y="258.200" width="20" height="7.600" rx="1" fill="#f3d0e6" stroke="#d7309c" stroke-width="2"/>
 <rect x="1403.100" y="270.200" width="8.800" height="7.700" rx="1" fill="#f3d0e6" stroke="#d7309c" stroke-width="2"/>
 <path d="M1416 270.600h8M1416 273.600h8M1416 276.600h8" stroke="#d7309c" stroke-width="1" fill="none"/>
 <!-- fill & sign -->
 <g transform="translate(1406.9 319) rotate(45)" fill="#e6d6f6" stroke="#9a50e0" stroke-width="2" stroke-linejoin="round">
  <path d="M-3.200 0v-15.600a3.200 3.200 0 0 1 6.400 0v15.600z"/>
  <path d="M-3.200 0l3.200 6.600l3.200-6.600z" fill="#fcfcfc"/>
 </g>
 <path d="M1402 324.300h8.500" stroke="#9a50e0" stroke-width="1.900" fill="none" stroke-linecap="round"/>
 <path d="M1413.200 323.600c1-2.800 2.200-4.200 2.900-3.700c.8.600-.7 3.700.5 3.900c1.100.1 1.700-3.200 2.800-3.100c1 .1-.2 3 .9 3.100c1 0 1.500-2.500 2.400-2.400c.9.100 0 2.400.9 2.500c.5 0 .9-.5 1.300-1.100" stroke="#9a50e0" stroke-width="1.700" fill="none" stroke-linecap="round"/>
 <!-- export pdf -->
 <path d="M1404.200 350.200h10.800l4 4v13.300h-14.800z" fill="#cfe6e8" stroke="#12939c" stroke-width="2" stroke-linejoin="round"/>
 <path d="M1411.8 354.6c.7 2.6-.9 5.800-3.800 8.200M1410.8 359.1c1.900 .2 3.500 .9 5 2" fill="none" stroke="#12939c" stroke-width="1.0" stroke-linecap="round"/>
 <circle cx="1418.900" cy="365.700" r="6.800" fill="#fcfcfc"/>
 <circle cx="1418.900" cy="365.700" r="5.700" fill="#12939c"/>
 <path d="M1415.400 364.600h3.600v-2.200l3.600 3.300l-3.600 3.300v-2.200h-3.600z" fill="#fff"/>
 <!-- compress -->
 <rect x="1415.300" y="397" width="7.600" height="17.600" rx="1" fill="#e4f4d4" stroke="#78c83a" stroke-width="2"/>
 <rect x="1404.200" y="406" width="8" height="8.600" fill="none" stroke="#78c83a" stroke-width="1.900" stroke-dasharray="2.200 1.300"/>
 <path d="M1403.800 396.200h7.800l-2.800 2.800l3.200 3.200l-2 2l-3.200-3.200l-3 3z" fill="#78c83a"/>
 <!-- comment doc -->
 <path d="M1403.100 441.200h9.600l5.300 5.300v13.300h-14.900z" fill="#f5edc6" stroke="#e0b81c" stroke-width="2" stroke-linejoin="round"/>
 <path d="M1412.400 441.500v5.300h5.300" fill="none" stroke="#e0b81c" stroke-width="1.600"/>
 <path d="M1413.600 451.100h10a1 1 0 0 1 1 1v7.700a1 1 0 0 1-1 1h-6l-2.600 3v-3h-1.400a1 1 0 0 1-1-1v-7.700a1 1 0 0 1 1-1z" fill="#e0b81c" stroke="#fcfcfc" stroke-width="1.100" paint-order="stroke"/>
 <path d="M1415.400 454.600h6.600M1415.400 457.200h6.600" stroke="#fff" stroke-width="1.100" fill="none"/>
 <!-- comment -->
 <path d="M1404.700 488h17a1.500 1.500 0 0 1 1.500 1.500v13a1.500 1.500 0 0 1-1.500 1.500h-6.700l-5.800 5.200v-5.200h-4.500a1.500 1.500 0 0 1-1.500-1.500v-13a1.500 1.500 0 0 1 1.500-1.500z" fill="#dfb825"/>
 <path d="M1407 494h12.400M1407 498h10.200" stroke="#fcf6dc" stroke-width="1.700" fill="none"/>
 <!-- scan -->
 <path d="M1407 543.500v-9h8.200l4.300 4.300v4.700" fill="#d2ecd6" stroke="#30b04a" stroke-width="2" stroke-linejoin="round"/>
 <path d="M1415 534.800v4.200h4.200" fill="none" stroke="#30b04a" stroke-width="1.500"/>
 <path d="M1403.300 541.600v8M1422.900 541.600v8" stroke="#30b04a" stroke-width="2.600" stroke-linecap="round" fill="none"/>
 <path d="M1403.300 545.300h19.600" stroke="#30b04a" stroke-width="2.600" fill="none"/>
 <path d="M1407 549.500v5.500h12.600v-5.500" fill="none" stroke="#30b04a" stroke-width="1.700" stroke-dasharray="1.600 1.100"/>
 <path d="M1421.800 533.600v5M1419.300 536.100h5M1418 531.600v2.600M1416.700 532.900h2.600M1403.300 535v3M1401.800 536.500h3" stroke="#30b04a" stroke-width="1" fill="none" stroke-linecap="round"/>
 <!-- protect -->
 <path d="M1413 580.200c2.600 1.600 5.200 2.400 8 2.600v7.400c0 5-3.400 8.400-8 10.600z" fill="#fcfcfc"/>
 <path d="M1413 580.200c-2.600 1.600-5.200 2.400-8 2.600v7.400c0 5 3.400 8.400 8 10.600z" fill="#d9d9f8"/>
 <path d="M1413 580.200c2.600 1.600 5.200 2.400 8 2.600v7.400c0 5-3.400 8.400-8 10.600c-4.600-2.200-8-5.600-8-10.600v-7.400c2.800-.2 5.400-1 8-2.600z" fill="none" stroke="#5e5ef0" stroke-width="1.900" stroke-linejoin="round"/>
 <!-- accessibility (active) -->
 <circle cx="1413" cy="635.800" r="9.600" fill="none" stroke="#fff" stroke-width="1.700"/>
 <circle cx="1413" cy="630.900" r="2" fill="#fff"/>
 <path d="M1408.300 633.600h9.400v1.800h-2.900v2.200l1.400 5h-1.900l-1.300-4.400l-1.300 4.400h-1.900l1.400-5v-2.200h-2.900z" fill="#fff"/>
 <!-- more tools -->
 <path d="M1404.500 686.800l9.800-9.700" stroke="#6e6e6e" stroke-width="3.600" stroke-linecap="round" fill="none"/>
 <path d="M1420.200 673.800l-3 3l-2.200-.6l-.6-2.200l3-3c-2.800-.8-5.600 1.200-5.600 4.200c0 2.600 2 4.600 4.600 4.600c3 0 5-2.800 3.800-6z" class="f"/>
 <circle cx="1404.700" cy="686.700" r=".8" fill="#fcfcfc"/>
 <circle cx="1419" cy="688" r="6.800" fill="#fcfcfc"/>
 <circle cx="1419" cy="688" r="5.700" class="f"/>
 <path d="M1419 684.700v6.600M1415.700 688h6.600" stroke="#fff" stroke-width="1.900" fill="none"/>
</svg>
<div class="a" style="left:0;top:776px;width:1433px;height:35px;background:linear-gradient(to bottom,rgba(0,0,0,0) 0%,rgba(0,0,0,.022) 45%,rgba(0,0,0,.09) 100%);pointer-events:none"></div>
</div>
</body>
</html>
